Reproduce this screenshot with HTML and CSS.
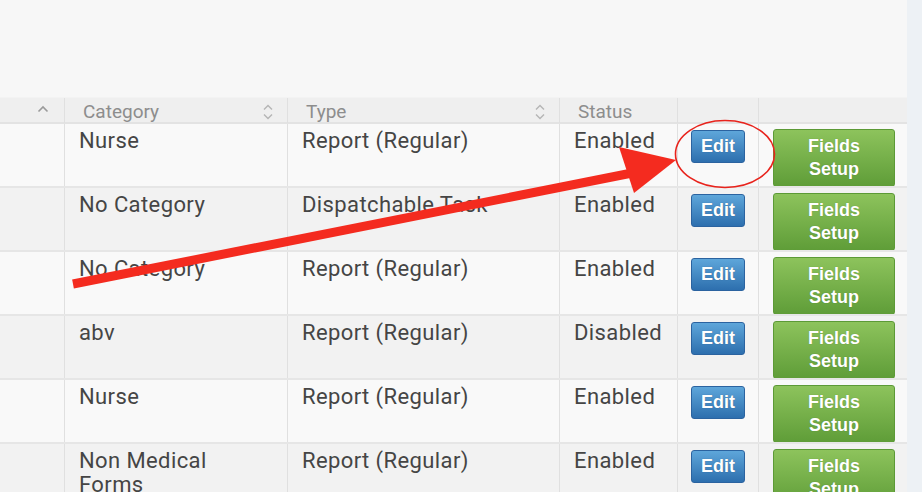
FILE: index.html
```html
<!DOCTYPE html>
<html>
<head>
<meta charset="utf-8">
<link rel="stylesheet" href="styles.css">
</head>
<body>
<div class="page">
  <div class="panel">
    <div class="top-space"></div>
    <div class="grid">
      <div class="row head">
        <div class="hc h-first"><svg width="12" height="8" viewBox="0 0 12 8"><path d="M1.5 6.5 L6 2 L10.5 6.5" fill="none" stroke="#9a9a9a" stroke-width="1.6"/></svg></div>
        <div class="hc"><span>Category</span><svg width="12" height="18" viewBox="0 0 12 18"><path d="M2 6.5 L6 2.5 L10 6.5 M2 11.5 L6 15.5 L10 11.5" fill="none" stroke="#b5b5b5" stroke-width="1.4"/></svg></div>
        <div class="hc"><span>Type</span><svg width="12" height="18" viewBox="0 0 12 18"><path d="M2 6.5 L6 2.5 L10 6.5 M2 11.5 L6 15.5 L10 11.5" fill="none" stroke="#b5b5b5" stroke-width="1.4"/></svg></div>
        <div class="hc"><span>Status</span></div>
        <div class="hc"></div>
        <div class="hc last"></div>
      </div>
      <div class="row odd">
        <div class="c"></div><div class="c">Nurse</div><div class="c">Report (Regular)</div><div class="c">Enabled</div>
        <div class="c cb"><button class="btn-edit">Edit</button></div>
        <div class="c cf last"><button class="btn-fields">Fields<br>Setup</button></div>
      </div>
      <div class="row even">
        <div class="c"></div><div class="c">No Category</div><div class="c">Dispatchable Task</div><div class="c">Enabled</div>
        <div class="c cb"><button class="btn-edit">Edit</button></div>
        <div class="c cf last"><button class="btn-fields">Fields<br>Setup</button></div>
      </div>
      <div class="row odd">
        <div class="c"></div><div class="c">No Category</div><div class="c">Report (Regular)</div><div class="c">Enabled</div>
        <div class="c cb"><button class="btn-edit">Edit</button></div>
        <div class="c cf last"><button class="btn-fields">Fields<br>Setup</button></div>
      </div>
      <div class="row even">
        <div class="c"></div><div class="c">abv</div><div class="c">Report (Regular)</div><div class="c">Disabled</div>
        <div class="c cb"><button class="btn-edit">Edit</button></div>
        <div class="c cf last"><button class="btn-fields">Fields<br>Setup</button></div>
      </div>
      <div class="row odd">
        <div class="c"></div><div class="c">Nurse</div><div class="c">Report (Regular)</div><div class="c">Enabled</div>
        <div class="c cb"><button class="btn-edit">Edit</button></div>
        <div class="c cf last"><button class="btn-fields">Fields<br>Setup</button></div>
      </div>
      <div class="row even">
        <div class="c"></div><div class="c">Non Medical Forms</div><div class="c">Report (Regular)</div><div class="c">Enabled</div>
        <div class="c cb"><button class="btn-edit">Edit</button></div>
        <div class="c cf last"><button class="btn-fields">Fields<br>Setup</button></div>
      </div>
    </div>
  </div>
  <div class="strip"></div>
</div>
<svg class="annot" width="922" height="492" viewBox="0 0 922 492">
  <line x1="73" y1="284" x2="632" y2="173" stroke="#f42b1f" stroke-width="9"/>
  <polygon points="619,147 676,160 634,193" fill="#f42b1f"/>
  <ellipse cx="725" cy="154" rx="49.5" ry="33.5" fill="none" stroke="#e8231c" stroke-width="1.6"/>
</svg>
</body>
</html>
```

FILE: styles.css
```css
html, body {
  margin: 0;
  padding: 0;
}
*, *::before, *::after { box-sizing: border-box; }
body {
  width: 922px;
  height: 492px;
  overflow: hidden;
  background: #edf1f5;
  font-family: Roboto, "Liberation Sans", sans-serif;
  position: relative;
}
.page {
  display: flex;
  height: 492px;
}
.panel {
  width: 907px;
  flex: none;
  background: #f7f7f7;
  box-shadow: 1px 0 2px rgba(0,0,0,0.08);
  overflow: hidden;
}
.strip {
  flex: 1;
  background: #edf1f5;
}
.top-space {
  height: 97px;
}
.grid {
  display: flex;
  flex-direction: column;
}
.row {
  display: grid;
  grid-template-columns: 65px 223px 272px 118px 81px 148px;
  flex: none;
}
.head {
  height: 27px;
  background: #efefef;
  border-top: 1px solid #f3f3f3;
  border-bottom: 2px solid #e3e3e3;
}
.hc {
  display: flex;
  align-items: center;
  justify-content: space-between;
  padding: 2px 15px 0 18px;
  border-right: 1px solid #e0e0e0;
  font-size: 19px;
  color: #8d8d8d;
}
.hc svg { margin-right: -2px; }
.h-first {
  justify-content: flex-end;
  padding-right: 17px;
  padding-top: 0;
  padding-bottom: 4px;
}
.row.odd, .row.even {
  height: 64px;
  border-bottom: 2px solid #e6e6e6;
}
.row.odd { background: #f9f9f9; }
.row.even { background: #f2f2f2; }
.c {
  padding: 5px 14px 0;
  font-size: 22px;
  letter-spacing: 0.4px;
  line-height: 24px;
  color: #454545;
  border-right: 1px solid #e0e0e0;
  overflow: hidden;
}
.last { border-right: none; }
.cb { padding: 6px 0 0 13px; }
.cf { padding: 5px 0 0 14px; }

.btn-edit {
  display: block;
  width: 54px;
  height: 33px;
  padding: 0;
  border: 1px solid #2b63a0;
  border-radius: 3px;
  background: linear-gradient(#5ea6da, #2d6fae);
  color: #fff;
  font-family: "Liberation Sans", Arial, sans-serif;
  font-weight: 700;
  font-size: 18px;
  letter-spacing: 0;
  text-shadow: 0 0 1px rgba(0,0,0,0.3);
}
.btn-fields {
  display: block;
  width: 122px;
  height: 58px;
  padding: 0;
  border: 1px solid #5c9a36;
  border-radius: 3px;
  background: linear-gradient(#8dc35c, #5f9d38);
  color: #fff;
  font-family: "Liberation Sans", Arial, sans-serif;
  font-weight: 700;
  font-size: 18px;
  letter-spacing: 0;
  line-height: 23px;
  text-shadow: 0 0 1px rgba(0,0,0,0.25);
}
.annot {
  position: absolute;
  left: 0;
  top: 0;
  pointer-events: none;
}
```
